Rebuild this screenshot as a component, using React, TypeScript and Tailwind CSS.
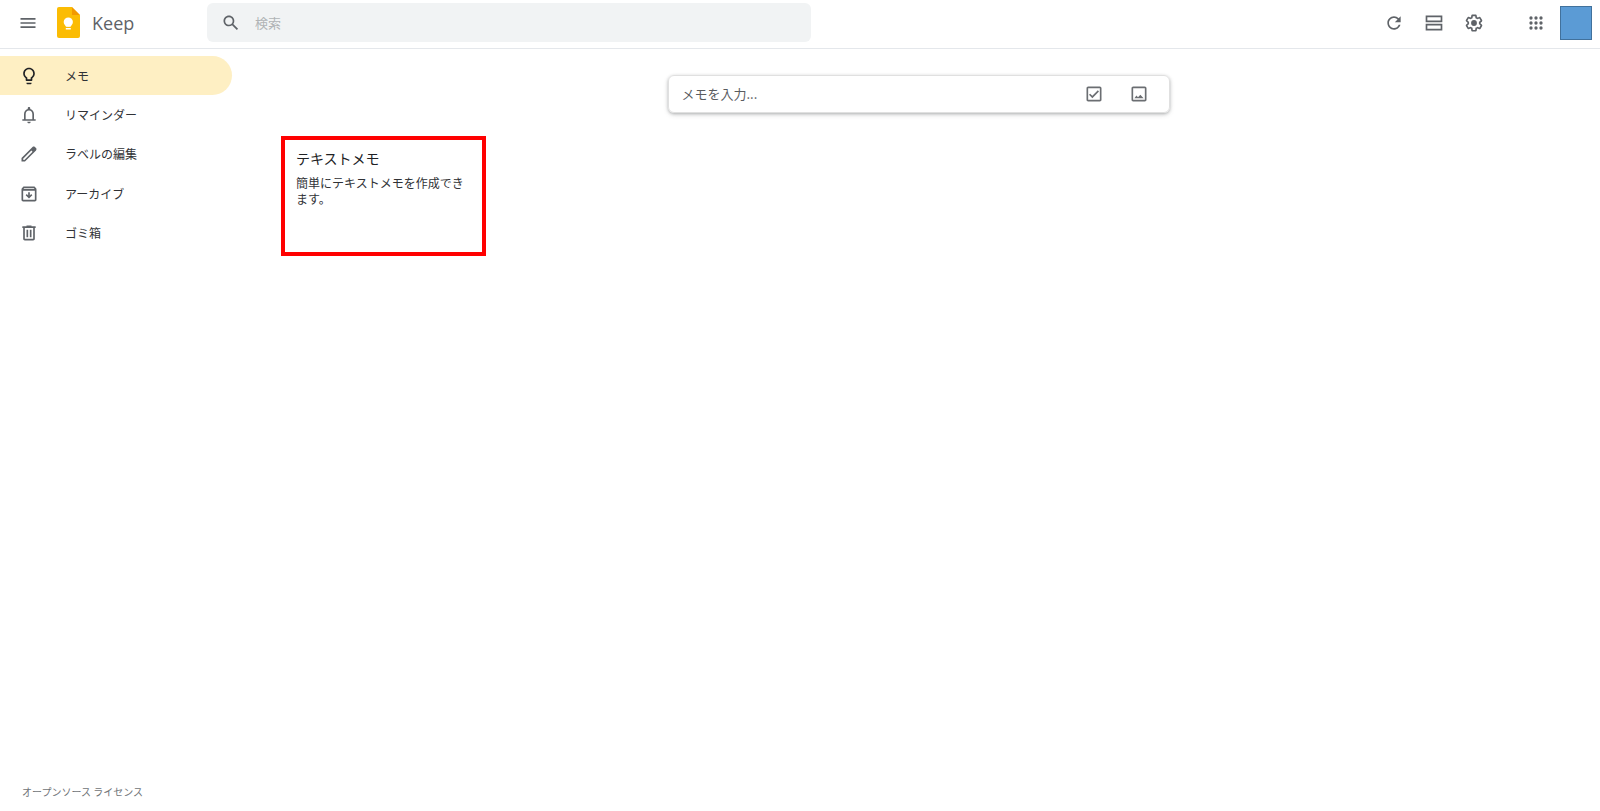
import React from 'react';

type IconProps = { d: string; className?: string; children?: React.ReactNode };

const Icon = ({ d, className = 'size-5', children }: IconProps) => (
  <svg className={`${className} shrink-0`} viewBox="0 0 24 24" fill="currentColor" aria-hidden="true">
    <path fillRule="evenodd" d={d} />
    {children}
  </svg>
);

const icons = {
  menu: 'M3 18h18v-2H3v2zm0-5h18v-2H3v2zm0-7v2h18V6H3z',
  search:
    'M20.49 19l-5.73-5.73C15.53 12.2 16 10.91 16 9.5 16 5.91 13.09 3 9.5 3S3 5.91 3 9.5 5.91 16 9.5 16c1.41 0 2.7-.47 3.77-1.24L19 20.49 20.49 19zM5 9.5C5 7.01 7.01 5 9.5 5S14 7.01 14 9.5 11.99 14 9.5 14 5 11.99 5 9.5z',
  refresh:
    'M17.65 6.35C16.2 4.9 14.21 4 12 4c-4.42 0-7.99 3.58-7.99 8s3.57 8 7.99 8c3.73 0 6.84-2.55 7.73-6h-2.08c-.82 2.33-3.04 4-5.65 4-3.31 0-6-2.69-6-6s2.69-6 6-6c1.66 0 3.14.69 4.22 1.78L13 11h7V4l-2.35 2.35z',
  list: 'M2 3h20v8H2V3zm2 2v4h16V5H4zM2 13h20v8H2v-8zm2 2v4h16v-4H4z',
  gear: 'M13.85 22.25h-3.7c-.74 0-1.36-.54-1.45-1.27l-.27-1.89c-.27-.14-.53-.29-.79-.46l-1.8.72c-.7.26-1.47-.03-1.81-.65L2.2 15.53c-.35-.66-.2-1.44.36-1.88l1.53-1.19c-.01-.15-.02-.3-.02-.46 0-.15.01-.31.02-.46l-1.52-1.19c-.59-.45-.74-1.26-.37-1.88l1.85-3.19c.34-.62 1.11-.9 1.79-.63l1.81.73c.26-.17.52-.32.78-.46l.27-1.91c.09-.7.71-1.25 1.44-1.25h3.7c.74 0 1.36.54 1.45 1.27l.27 1.89c.27.14.53.29.79.46l1.8-.72c.71-.26 1.48.03 1.82.65l1.84 3.18c.36.66.2 1.44-.36 1.88l-1.52 1.19c.01.15.02.3.02.46s-.01.31-.02.46l1.52 1.19c.56.45.72 1.23.37 1.86l-1.86 3.22c-.34.62-1.11.9-1.8.63l-1.8-.72c-.26.17-.52.32-.78.46l-.27 1.91c-.1.68-.72 1.22-1.46 1.22zm-3.23-2h2.76l.37-2.55.53-.22c.44-.18.88-.44 1.34-.78l.45-.34 2.38.96 1.38-2.4-2.03-1.58.07-.56c.03-.26.06-.51.06-.78s-.03-.53-.06-.78l-.07-.56 2.03-1.58-1.39-2.4-2.39.96-.45-.35c-.42-.32-.87-.58-1.33-.77l-.52-.22-.37-2.55h-2.76l-.37 2.55-.53.21c-.44.19-.88.44-1.34.79l-.45.33-2.38-.95-1.39 2.39 2.03 1.58-.07.56a7 7 0 0 0-.06.79c0 .26.02.53.06.78l.07.56-2.03 1.58 1.38 2.4 2.39-.96.45.35c.43.33.86.58 1.33.77l.53.22.38 2.55z',
  apps: 'M6 8a2 2 0 100-4 2 2 0 000 4zm6 0a2 2 0 100-4 2 2 0 000 4zm6 0a2 2 0 100-4 2 2 0 000 4zM6 14a2 2 0 100-4 2 2 0 000 4zm6 0a2 2 0 100-4 2 2 0 000 4zm6 0a2 2 0 100-4 2 2 0 000 4zM6 20a2 2 0 100-4 2 2 0 000 4zm6 0a2 2 0 100-4 2 2 0 000 4zm6 0a2 2 0 100-4 2 2 0 000 4z',
  bulb: 'M9 21c0 .5.4 1 1 1h4c.6 0 1-.5 1-1v-1H9v1zm3-19C8.1 2 5 5.1 5 9c0 2.4 1.2 4.5 3 5.7V17c0 .5.4 1 1 1h6c.6 0 1-.5 1-1v-2.3c1.8-1.3 3-3.4 3-5.7 0-3.9-3.1-7-7-7zm2.9 11.1l-.9.6V16h-4v-2.3l-.9-.6C7.8 12.2 7 10.6 7 9c0-2.8 2.2-5 5-5s5 2.2 5 5c0 1.6-.8 3.2-2.1 4.1z',
  bell: 'M18 17v-6c0-3.07-1.63-5.64-4.5-6.32V4c0-.83-.67-1.5-1.5-1.5s-1.5.67-1.5 1.5v.68C7.64 5.36 6 7.92 6 11v6H4v2h16v-2h-2zm-2 0H8v-6c0-2.48 1.51-4.5 4-4.5s4 2.02 4 4.5v6zm-4 5c1.1 0 2-.9 2-2h-4c0 1.1.9 2 2 2z',
  pencil:
    'M20.41 4.94l-1.35-1.35c-.78-.78-2.05-.78-2.83 0L3 16.82V21h4.18L20.41 7.77c.79-.78.79-2.05 0-2.83zm-14 14.12L5 19v-1.36l9.82-9.82 1.41 1.41-9.82 9.83z',
  archive:
    'M20.54 5.23l-1.39-1.68C18.88 3.21 18.47 3 18 3H6c-.47 0-.88.21-1.16.55L3.46 5.23C3.17 5.57 3 6.02 3 6.5V19c0 1.1.89 2 2 2h14c1.1 0 2-.9 2-2V6.5c0-.48-.17-.93-.46-1.27zM6.24 5h11.52l.83 1H5.42l.82-1zM5 19V8h14v11H5zm11-5.5l-4 4-4-4 1.41-1.41L11 13.67V10h2v3.67l1.59-1.59L16 13.5z',
  trash: 'M15 4V3H9v1H4v2h1v13c0 1.1.9 2 2 2h10c1.1 0 2-.9 2-2V6h1V4h-5zm2 15H7V6h10v13zM9 8h2v9H9zm4 0h2v9h-2z',
  check:
    'M19 3H5c-1.1 0-2 .9-2 2v14c0 1.1.9 2 2 2h14c1.1 0 2-.9 2-2V5c0-1.1-.9-2-2-2zm0 16H5V5h14v14zM18 9l-1.4-1.4-6.6 6.6-2.6-2.6L6 13l4 4z',
  image:
    'M19 3H5c-1.1 0-2 .9-2 2v14c0 1.1.9 2 2 2h14c1.1 0 2-.9 2-2V5c0-1.1-.9-2-2-2zm0 16H5V5h14v14zM6.5 17l2.4-3.2 1.9 2.2 2.8-3.2 3.9 4.2z',
};

const navItems = [
  { label: 'メモ', icon: icons.bulb, active: true },
  { label: 'リマインダー', icon: icons.bell },
  { label: 'ラベルの編集', icon: icons.pencil },
  { label: 'アーカイブ', icon: icons.archive },
  { label: 'ゴミ箱', icon: icons.trash },
];

const KeepLogo = () => (
  <svg className="h-[31px] w-[23px] shrink-0" viewBox="0 0 23 31" aria-hidden="true">
    <path fill="#fbbc04" d="M2 0h13l8 8v21a2 2 0 0 1-2 2H2a2 2 0 0 1-2-2V2a2 2 0 0 1 2-2z" />
    <path fill="#fff" d="M15 0h8v8z" />
    <path fill="#f29900" d="M15 0l8 8h-8z" />
    <circle cx="11.3" cy="15" r="4.6" fill="#fff" />
    <path fill="#fff" d="M8.8 17h5v2.8h-5zM8.8 21h5v1.5h-5z" />
  </svg>
);

const IconButton = ({ label, d, children }: { label: string; d: string; children?: React.ReactNode }) => (
  <button type="button" aria-label={label} className="flex size-10 items-center justify-center rounded-full hover:bg-gray-100">
    <Icon d={d}>{children}</Icon>
  </button>
);

const Header = () => (
  <header className="flex h-[49px] items-center border-b border-[#e4e7eb] pb-[3px] px-2 text-[#5f6368]">
    <div className="flex w-[199px] shrink-0 items-center">
      <IconButton label="メインメニュー" d={icons.menu} />
      <a href="#" className="ml-[9px] flex items-center gap-3 font-['Open_Sans','Noto_Sans',sans-serif] text-lg leading-6">
        <KeepLogo />
        <span>Keep</span>
      </a>
    </div>
    <form role="search" className="flex h-[39px] min-w-0 max-w-[604px] flex-1 items-center gap-3.5 rounded-md bg-[#f1f3f4] px-3.5">
      <Icon d={icons.search} />
      <input
        type="search"
        aria-label="検索"
        placeholder="検索"
        className="min-w-0 flex-1 bg-transparent text-[13px] leading-5 outline-none placeholder:text-[#b0b3b6]"
      />
    </form>
    <div className="ml-auto flex shrink-0 items-center">
      <IconButton label="更新" d={icons.refresh} />
      <IconButton label="リスト表示" d={icons.list} />
      <IconButton label="設定" d={icons.gear}>
        <circle cx="12" cy="12" r="3.5" />
      </IconButton>
      <div className="ml-[22px] mr-1 flex">
        <IconButton label="アプリ" d={icons.apps} />
      </div>
      <button type="button" aria-label="アカウント" className="h-[34px] w-8 border border-[#41719c] bg-[#5b9bd5]" />
    </div>
  </header>
);

const Sidebar = () => (
  <aside className="flex w-[281px] shrink-0 flex-col justify-between pt-[7px]">
    <nav className="grid h-[197px] w-[232px] grid-rows-5">
      {navItems.map((item) => (
        <a
          key={item.label}
          href="#"
          aria-current={item.active ? 'page' : undefined}
          className={`flex items-center gap-[26px] rounded-r-full pl-[19px] text-xs text-[#303236] ${
            item.active ? 'bg-[#feefc3]' : 'hover:bg-gray-100'
          }`}
        >
          <span className={item.active ? 'text-[#202124]' : 'text-[#5f6368]'}>
            <Icon d={item.icon} />
          </span>
          {item.label}
        </a>
      ))}
    </nav>
    <a href="#" className="mb-[11px] ml-[22px] self-start text-[10px] leading-4 text-[#6f7377]">
      オープンソース ライセンス
    </a>
  </aside>
);

const TakeNote = () => (
  <div className="mx-auto flex h-[38px] w-full max-w-[502px] items-center rounded-md border border-[#e0e0e0] pl-[13px] pr-2.5 shadow-[0_1px_3px_rgba(60,64,67,0.3),0_2px_5px_rgba(60,64,67,0.15)]">
    <input
      type="text"
      aria-label="メモを入力"
      placeholder="メモを入力..."
      className="min-w-0 flex-1 text-[13px] leading-5 outline-none placeholder:text-[#5a5c5f]"
    />
    <div className="flex gap-[5px] text-[#6b6e72]">
      <IconButton label="新しいリスト" d={icons.check} />
      <IconButton label="画像付きの新しいメモ" d={icons.image} />
    </div>
  </div>
);

const NoteCard = () => (
  <article className="min-h-[120px] w-[205px] border-4 border-[#ff0000] px-[11px] pt-2 text-[#303236]">
    <h2 className="text-sm leading-5 text-[#202124]">テキストメモ</h2>
    <p className="mt-[7px] text-xs leading-4">簡単にテキストメモを作成できます。</p>
  </article>
);

export default function App() {
  return (
    <div className="flex min-h-screen flex-col bg-white font-['Noto_Sans_CJK_JP',sans-serif]">
      <Header />
      <div className="flex flex-1">
        <Sidebar />
        <main className="flex-1 pr-11 pt-[26px]">
          <TakeNote />
          <div className="mt-[23px]">
            <NoteCard />
          </div>
        </main>
      </div>
    </div>
  );
}
